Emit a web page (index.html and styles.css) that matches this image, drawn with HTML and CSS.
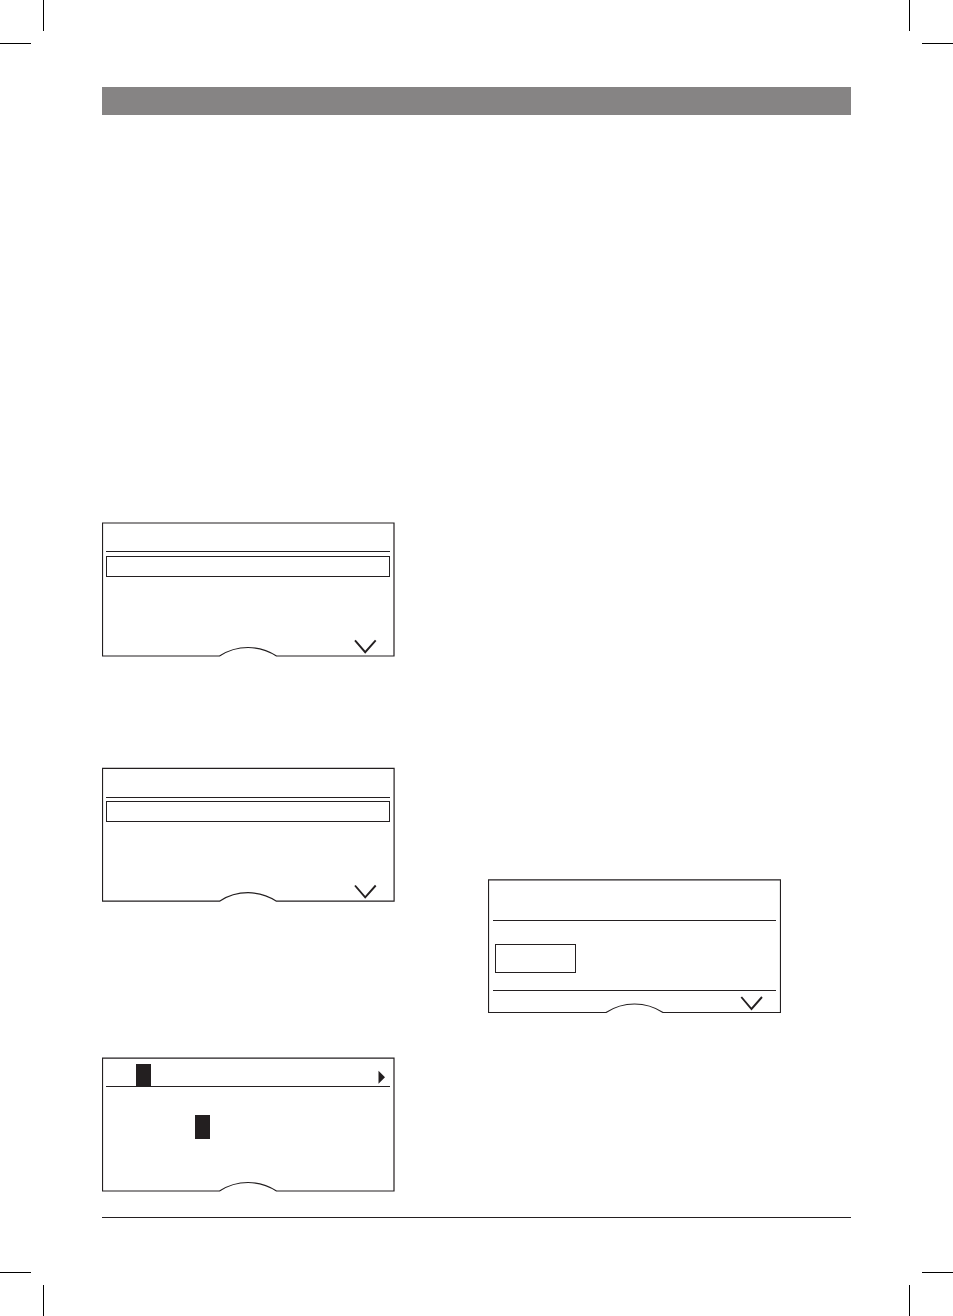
FILE: index.html
```html
<!DOCTYPE html>
<html lang="en">
<head>
<meta charset="utf-8">
<link rel="stylesheet" href="styles.css">
</head>
<body>
<div class="sheet">
  <div class="marks">
    <svg class="mark" viewBox="0 0 44 44"><path d="M43.5 0V31M0 43.5H31"/></svg>
    <svg class="mark" viewBox="0 0 44 44"><path d="M.5 0V31M13 43.5H44"/></svg>
  </div>
  <main class="page">
    <header class="banner"></header>
    <div class="columns">
      <section class="column column-left">
        <figure class="display">
          <svg class="frame" viewBox="0 0 293 135">
            <path d="M117.5 134H.5V1H292V134H174.5A52 52 0 0 0 117.5 134Z"/>
            <path class="chevron" d="M253 118.3L263.2 130.2L273.7 118.3"/>
          </svg>
          <div class="screen">
            <div class="title"></div>
            <div class="row"></div>
          </div>
        </figure>
        <figure class="display display-second">
          <svg class="frame" viewBox="0 0 293 135">
            <path d="M117.5 134.2H.5V1.4H292.1V134.2H174.5A52 52 0 0 0 117.5 134.2Z"/>
            <path class="chevron" d="M253 118.5L263.2 130.4L273.7 118.5"/>
          </svg>
          <div class="screen">
            <div class="title title-tall"></div>
            <div class="row row-close"></div>
          </div>
        </figure>
        <figure class="display display-third">
          <svg class="frame" viewBox="0 0 293 135">
            <path d="M117.5 134H.5V1.2H292V134H174.5A52 52 0 0 0 117.5 134Z"/>
            <path class="arrow" d="M276.5 13.8L283 20.3L276.5 26.8Z"/>
          </svg>
          <div class="screen">
            <div class="title title-edit"><span class="cursor"></span></div>
            <div class="letters"><span class="cursor cursor-tall"></span></div>
          </div>
        </figure>
      </section>
      <section class="column column-right">
        <figure class="display">
          <svg class="frame" viewBox="0 0 293 135">
            <path d="M118 133.5H.5V.9H292.5V133.5H175A52 52 0 0 0 118 133.5Z"/>
            <path class="chevron" d="M253.3 118L263.5 130L274 118"/>
          </svg>
          <div class="screen screen-option">
            <div class="title title-large"></div>
            <div class="options"><div class="option"></div></div>
          </div>
        </figure>
      </section>
    </div>
    <hr class="footer-rule">
  </main>
  <div class="marks">
    <svg class="mark" viewBox="0 0 44 44"><path d="M43.5 13V44M0 .5H31"/></svg>
    <svg class="mark" viewBox="0 0 44 44"><path d="M.5 13V44M13 .5H44"/></svg>
  </div>
</div>
</body>
</html>
```
FILE: styles.css
```css
* { box-sizing: border-box; }

body {
  margin: 0;
  background: #fff;
  color: #231f20;
  font-family: "Liberation Sans", sans-serif;
}

.sheet {
  display: flex;
  flex-direction: column;
  min-height: 100vh;
}

.marks {
  display: flex;
  justify-content: space-between;
}

.mark {
  display: block;
  width: 44px;
  height: 44px;
  fill: none;
  stroke: #000;
}

.page {
  flex: 1;
  padding: 43px 102px 0;
}

.banner {
  height: 28px;
  background: #868484;
}

.columns {
  display: grid;
  grid-template-columns: 1fr 1fr;
  gap: 23px;
}

.column-left { padding-top: 407px; }
.column-right { padding-top: 764px; }

.display {
  display: grid;
  width: 293px;
  height: 135px;
  margin: 0;
}

.display-second { margin-top: 110px; }
.display-third { margin-top: 155px; }

.frame,
.screen { grid-area: 1 / 1; }

.frame {
  display: block;
  width: 293px;
  height: 135px;
  fill: none;
  stroke: #231f20;
  stroke-width: 1.2;
}

.frame .chevron { stroke-width: 1.9; }

.frame .arrow {
  fill: #231f20;
  stroke: none;
}

.screen { padding: 0 5px 0 4px; }
.screen-option { padding: 0 5px; }

.title {
  height: 30px;
  border-bottom: 1px solid #231f20;
}

.title-tall { height: 31px; }
.title-large { height: 42px; }
.title-edit { padding: 7px 0 0 30px; }

.row {
  height: 21px;
  margin-top: 4px;
  border: 1px solid #231f20;
}

.row-close { margin-top: 3px; }

.cursor {
  display: block;
  width: 15px;
  height: 22px;
  background: #231f20;
}

.cursor-tall { height: 24px; }
.letters { padding: 28px 0 0 89px; }

.options {
  height: 70px;
  padding: 23px 0 0 2px;
  border-bottom: 1px solid #231f20;
}

.option {
  width: 81px;
  height: 29px;
  border: 1px solid #231f20;
}

.footer-rule {
  height: 1px;
  margin: 25px 0 0;
  border: 0;
  background: #231f20;
}
```
